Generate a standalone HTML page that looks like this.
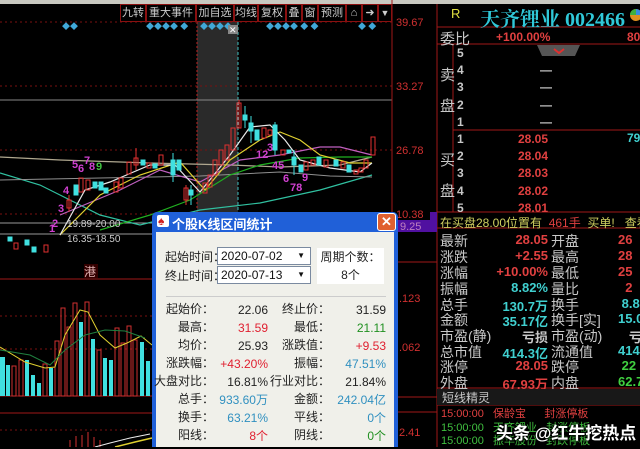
<!DOCTYPE html>
<html><head><meta charset="utf-8"><style>
*{margin:0;padding:0;box-sizing:border-box}
body{width:640px;height:447px;background:#000;overflow:hidden;position:relative;font-family:"Liberation Sans","Noto Sans CJK SC",sans-serif}
.a{position:absolute;white-space:nowrap}
.tb{position:absolute;top:4px;height:18px;border:1px solid #8a1010;color:#ccc;font-size:11px;line-height:16px;text-align:center;background:#000;white-space:nowrap;overflow:hidden}
.lab{position:absolute;color:#c8c8c8;font-size:14px;left:440px;width:110px;white-space:nowrap}
.v{position:absolute;font-size:13px;font-weight:bold;text-align:right;width:110px;left:438px;white-space:nowrap}
.l2{position:absolute;color:#c8c8c8;font-size:14px;left:551px;white-space:nowrap}
.v2{position:absolute;font-size:13px;font-weight:bold;left:618px;white-space:nowrap}
.dl{position:absolute;color:#222;font-size:12px;text-align:right;white-space:nowrap}
.dl div{height:18px;line-height:18px}
</style></head><body>
<div class="a" style="left:0;top:0;width:640px;height:4px;background:#c8c8c0"></div>
<svg class="a" style="left:0;top:0" width="640" height="447">
<rect x="197" y="22" width="41" height="190" fill="#2a2a2a"/>
<line x1="197" y1="22" x2="197" y2="212" stroke="#c02020" stroke-dasharray="2,2"/>
<line x1="238" y1="22" x2="238" y2="212" stroke="#40c0c0" stroke-dasharray="3,2"/>
<g stroke="#7a1010" stroke-dasharray="2,3">
<line x1="0" y1="22" x2="392" y2="22"/><line x1="0" y1="86" x2="392" y2="86"/><line x1="0" y1="150" x2="392" y2="150"/><line x1="0" y1="214" x2="392" y2="214"/>
<line x1="0" y1="316" x2="392" y2="316"/><line x1="0" y1="349" x2="392" y2="349"/><line x1="0" y1="430" x2="392" y2="430"/>
</g>
<line x1="0" y1="100" x2="392" y2="100" stroke="#888"/>
<line x1="0" y1="223" x2="152" y2="223" stroke="#999"/>
<line x1="0" y1="234" x2="152" y2="234" stroke="#999"/>
<g stroke="#a01818"><line x1="0" y1="279" x2="392" y2="279"/><line x1="0" y1="396" x2="392" y2="396"/><line x1="0" y1="413" x2="392" y2="413"/>
<line x1="392" y1="0" x2="392" y2="447"/><line x1="437" y1="4" x2="437" y2="447"/><line x1="453" y1="44" x2="453" y2="212"/>
<line x1="437" y1="27" x2="640" y2="27"/><line x1="437" y1="44" x2="640" y2="44"/><line x1="453" y1="130" x2="640" y2="130"/><line x1="437" y1="212" x2="640" y2="212"/><line x1="437" y1="228" x2="640" y2="228"/><line x1="437" y1="388" x2="640" y2="388"/><line x1="437" y1="405" x2="640" y2="405"/>
<line x1="392" y1="262" x2="437" y2="262"/><line x1="392" y1="397" x2="437" y2="397"/><line x1="392" y1="412" x2="437" y2="412"/></g>
<g>
<text x="62" y="29" font-size="8" fill="#40a8d8">◆◆</text>
<text x="146" y="29" font-size="8" fill="#40a8d8">◆◆◆◆ ◆</text>
<text x="200" y="29" font-size="8" fill="#40a8d8">◆◆◆◆</text>
<text x="266" y="29" font-size="8" fill="#40a8d8">◆◆◆◆ ◆ ◆</text>
<text x="358" y="29" font-size="8" fill="#40a8d8">◆ ◆</text>
</g>
<rect x="228" y="25" width="10" height="9" fill="#888"/><text x="229" y="33" font-size="9" fill="#fff">✕</text>
<polyline fill="none" stroke="#b0a890" stroke-width="1.2" points="0,157 60,160 150,163 230,165 280,167 340,165 372,157"/>
<polyline fill="none" stroke="#30c0a0" stroke-width="1.2" points="0,173 40,185 70,200 100,215 140,225 200,210 260,203 320,190 372,175"/>
<polyline fill="none" stroke="#909090" points="0,180 100,178 200,176 280,172 330,176 372,177"/>
<polyline fill="none" stroke="#20b020" stroke-width="1.2" points="100,230 150,215 190,200 230,175 260,165 300,158 340,157 372,157"/>
<polyline fill="none" stroke="#c060c0" stroke-width="1.2" points="60,215 120,190 160,170 200,182 240,160 280,155 320,147 340,147 372,155"/>
<polyline fill="none" stroke="#e0d030" stroke-width="1.2" points="60,235 100,195 140,175 180,162 205,190 230,160 260,140 280,132 300,140 320,155 350,163 372,163"/>
<polyline fill="none" stroke="#e8e8e8" stroke-width="1.2" points="60,235 85,190 110,182 150,165 175,165 200,192 230,155 250,127 270,125 285,140 300,160 330,168 360,172 372,163"/>
<g stroke="#e03030" fill="none">
<rect x="67" y="200" width="4" height="8"/><rect x="79" y="178" width="4" height="14"/><rect x="86" y="180" width="4" height="10"/><rect x="114" y="182" width="4" height="10"/><rect x="119" y="178" width="4" height="10"/><rect x="127" y="162" width="4" height="12"/><rect x="134" y="158" width="4" height="7"/><rect x="147" y="163" width="4" height="5"/><rect x="159" y="155" width="4" height="10"/>
<rect x="184" y="188" width="4" height="12"/><rect x="203" y="183" width="4" height="10"/><rect x="208" y="175" width="4" height="12"/><rect x="213" y="160" width="4" height="15"/><rect x="219" y="150" width="4" height="15"/><rect x="225" y="145" width="4" height="15"/><rect x="231" y="128" width="4" height="22"/><rect x="237" y="103" width="4" height="25"/>
<rect x="262" y="128" width="4" height="10"/><rect x="268" y="130" width="4" height="5"/><rect x="281" y="150" width="4" height="5"/><rect x="304" y="162" width="4" height="8"/><rect x="311" y="160" width="4" height="5"/><rect x="324" y="160" width="4" height="7"/><rect x="341" y="162" width="4" height="6"/><rect x="354" y="170" width="4" height="4"/><rect x="359" y="168" width="4" height="4"/><rect x="364" y="160" width="4" height="8"/><rect x="371" y="137" width="4" height="18"/>
<line x1="69" y1="195" x2="69" y2="212"/><line x1="136" y1="148" x2="136" y2="170"/><line x1="239" y1="100" x2="239" y2="128"/><line x1="186" y1="185" x2="186" y2="205"/>
<rect x="14" y="243" width="4" height="6"/><rect x="44" y="245" width="4" height="7"/>
</g>
<g fill="#40e0e0" stroke="#40e0e0">
<rect x="74" y="185" width="4" height="10"/><rect x="93" y="182" width="4" height="6"/><rect x="99" y="182" width="4" height="8"/><rect x="104" y="188" width="4" height="5"/><rect x="141" y="160" width="4" height="5"/><rect x="153" y="164" width="4" height="4"/><rect x="171" y="160" width="4" height="15"/><rect x="177" y="160" width="4" height="10"/><rect x="189" y="190" width="4" height="5"/>
<rect x="243" y="115" width="4" height="5"/><rect x="249" y="123" width="4" height="8"/><rect x="255" y="130" width="4" height="10"/><rect x="273" y="125" width="4" height="25"/><rect x="287" y="150" width="4" height="3"/><rect x="292" y="157" width="4" height="8"/><rect x="299" y="165" width="4" height="7"/><rect x="317" y="157" width="4" height="8"/><rect x="334" y="160" width="4" height="6"/><rect x="347" y="165" width="4" height="7"/>
<line x1="173" y1="153" x2="173" y2="182"/><line x1="191" y1="185" x2="191" y2="205"/><line x1="245" y1="106" x2="245" y2="128"/><line x1="251" y1="116" x2="251" y2="143"/><line x1="275" y1="122" x2="275" y2="155"/><line x1="294" y1="150" x2="294" y2="175"/>
<rect x="8" y="237" width="4" height="4"/><rect x="25" y="240" width="4" height="5"/><rect x="32" y="247" width="4" height="5"/>
</g>
<g font-size="11" fill="#d040d0" font-weight="bold">
<text x="63" y="194">4</text><text x="72" y="168">5</text><text x="78" y="172">6</text><text x="84" y="164">7</text><text x="89" y="170">8</text><text x="96" y="170" fill="#40c040">9</text>
<text x="58" y="212">3</text><text x="52" y="227">2</text><text x="49" y="232">1</text>
<text x="256" y="158">12</text><text x="267" y="151">3</text><text x="272" y="169">45</text><text x="283" y="182">6</text><text x="290" y="191">78</text><text x="302" y="181">9</text>
</g>
<text x="67" y="227" font-size="10" fill="#ccc">19.89-20.00</text>
<text x="67" y="242" font-size="10" fill="#ccc">16.35-18.50</text>
<rect x="84" y="264" width="14" height="14" fill="#300"/><text x="84" y="276" font-size="12" fill="#e0b0b0">港</text>
<g>
<rect x="0" y="357" width="5" height="39" fill="#40e0e0"/><rect x="6" y="365" width="4" height="31" fill="#40e0e0"/><rect x="12" y="366" width="4" height="30" fill="none" stroke="#d03030"/>
<rect x="19" y="360" width="4" height="36" fill="none" stroke="#d03030"/><rect x="25" y="360" width="4" height="36" fill="#40e0e0"/><rect x="31" y="375" width="4" height="21" fill="#40e0e0"/><rect x="37" y="383" width="4" height="13" fill="#40e0e0"/>
<rect x="43" y="364" width="4" height="32" fill="none" stroke="#d03030"/><rect x="49" y="368" width="4" height="28" fill="#40e0e0"/><rect x="55" y="341" width="4" height="55" fill="none" stroke="#d03030"/>
<rect x="61" y="308" width="4" height="88" fill="none" stroke="#d03030"/><rect x="67" y="327" width="4" height="69" fill="none" stroke="#d03030"/><rect x="73" y="303" width="4" height="93" fill="none" stroke="#d03030"/><rect x="79" y="322" width="4" height="74" fill="#40e0e0"/>
<rect x="85" y="302" width="4" height="94" fill="none" stroke="#d03030"/><rect x="91" y="339" width="4" height="57" fill="#40e0e0"/><rect x="97" y="350" width="4" height="46" fill="none" stroke="#d03030"/><rect x="103" y="358" width="4" height="38" fill="#40e0e0"/>
<rect x="109" y="360" width="4" height="36" fill="#40e0e0"/><rect x="115" y="328" width="4" height="68" fill="none" stroke="#d03030"/><rect x="121" y="343" width="4" height="53" fill="none" stroke="#d03030"/><rect x="127" y="326" width="4" height="70" fill="none" stroke="#d03030"/>
<rect x="133" y="340" width="4" height="56" fill="none" stroke="#d03030"/><rect x="140" y="342" width="4" height="54" fill="#40e0e0"/><rect x="146" y="361" width="4" height="35" fill="#40e0e0"/>
<polyline fill="none" stroke="#e0d030" points="0,347 25,362 45,368 55,367 65,335 80,310 88,312 100,335 115,348 127,343 141,336 152,345"/>
<polyline fill="none" stroke="#208040" points="0,350 30,355 50,365 65,350 85,335 105,330 125,331 145,338"/>
</g>
<g stroke="#d03030"><line x1="70" y1="440" x2="70" y2="447"/><line x1="76" y1="436" x2="76" y2="447"/><line x1="82" y1="435" x2="82" y2="447"/><line x1="88" y1="432" x2="88" y2="447"/><line x1="94" y1="437" x2="94" y2="447"/><line x1="100" y1="440" x2="100" y2="447"/></g>
<polyline fill="none" stroke="#eee" points="95,447 110,443 130,438 150,434"/><polyline fill="none" stroke="#e0d030" stroke-width="1.5" points="115,447 135,442 152,438"/>
<g font-size="11" fill="#d03030"><text x="396" y="26">39.67</text><text x="396" y="90">33.27</text><text x="396" y="154">26.78</text><text x="396" y="218">10.38</text><text x="399" y="302">.123</text><text x="399" y="351">.062</text><text x="399" y="436">2.41</text></g>
<rect x="398" y="220" width="39" height="12" fill="#5010a0"/><text x="400" y="230" font-size="11" fill="#c080c0">9.25</text>
<rect x="430" y="212" width="7" height="18" fill="#5010a0"/>
<circle cx="636" cy="15" r="6" fill="#e09020"/><path d="M636 15 L636 9 A6 6 0 0 1 642 15Z" fill="#3a8ae0"/><path d="M636 15 L630 15 A6 6 0 0 1 636 9Z" fill="#40b040"/>
<path d="M537 45 L580 45 L575 56 L542 56Z" fill="#555"/><path d="M554 49 L559 53 L564 49" stroke="#e03030" stroke-width="2" fill="none"/>
</svg>
<div class="tb" style="left:120px;width:26px">九转</div>
<div class="tb" style="left:146px;width:50px">重大事件</div>
<div class="tb" style="left:196px;width:38px">加自选</div>
<div class="tb" style="left:234px;width:24px">均线</div>
<div class="tb" style="left:258px;width:28px">复权</div>
<div class="tb" style="left:286px;width:16px">叠</div>
<div class="tb" style="left:302px;width:16px">窗</div>
<div class="tb" style="left:318px;width:28px">预测</div>
<div class="tb" style="left:346px;width:16px">⌂</div>
<div class="tb" style="left:362px;width:16px">➜</div>
<div class="tb" style="left:378px;width:14px;font-size:9px">▼</div>
<div class="a" style="left:451px;top:6px;color:#e0e040;font-size:13px">R</div>
<div class="a" style="left:480px;top:3px;color:#30c8d8;font-size:20px;font-family:'Liberation Serif','Noto Serif CJK SC',serif;font-weight:bold">天齐锂业 002466</div>
<div class="a" style="left:440px;top:28px;color:#c8c8c8;font-size:15px">委比</div>
<div class="a" style="left:496px;top:30px;color:#e04040;font-size:12px;font-weight:bold">+100.00%</div>
<div class="a" style="left:627px;top:30px;color:#e04040;font-size:12px;font-weight:bold">80</div>
<div class="a" style="left:440px;top:64px;color:#c8c8c8;font-size:15px">卖</div>
<div class="a" style="left:440px;top:95px;color:#c8c8c8;font-size:15px">盘</div>
<div class="a" style="left:440px;top:149px;color:#c8c8c8;font-size:15px">买</div>
<div class="a" style="left:440px;top:180px;color:#c8c8c8;font-size:15px">盘</div>
<div class="a" style="left:457px;top:45px;color:#c8c8c8;font-size:12px;font-weight:bold;line-height:17.2px">5<br>4<br>3<br>2<br>1</div>
<div class="a" style="left:540px;top:45px;color:#c8c8c8;font-size:12px;font-weight:bold;line-height:17.2px">&nbsp;<br>—<br>—<br>—<br>—</div>
<div class="a" style="left:457px;top:131px;color:#c8c8c8;font-size:12px;font-weight:bold;line-height:17.2px">1<br>2<br>3<br>4<br>5</div>
<div class="a" style="left:518px;top:131px;color:#e04040;font-size:12px;font-weight:bold;line-height:17.2px">28.05<br>28.04<br>28.03<br>28.02<br>28.01</div>
<div class="a" style="left:627px;top:131px;color:#40d0d0;font-size:12px;font-weight:bold">79</div>
<div class="a" style="left:440px;top:214px;font-size:12px;color:#d0d060">在买盘28.00位置有 <span style="color:#e04040">&nbsp;461手</span>&nbsp; 买单! &nbsp;&nbsp;查看</div>
<div class="lab" style="top:231px">最新</div><div class="v" style="top:232px;color:#e04040">28.05</div><div class="l2" style="top:231px">开盘</div><div class="v2" style="top:232px;color:#e04040">26</div>
<div class="lab" style="top:247px">涨跌</div><div class="v" style="top:248px;color:#e04040">+2.55</div><div class="l2" style="top:247px">最高</div><div class="v2" style="top:248px;color:#e04040">28</div>
<div class="lab" style="top:263px">涨幅</div><div class="v" style="top:264px;color:#e04040">+10.00%</div><div class="l2" style="top:263px">最低</div><div class="v2" style="top:264px;color:#e04040">25</div>
<div class="lab" style="top:279px">振幅</div><div class="v" style="top:280px;color:#40d0d0">8.82%</div><div class="l2" style="top:279px">量比</div><div class="v2" style="top:280px;color:#e04040">&nbsp;&nbsp;2</div>
<div class="lab" style="top:295px">总手</div><div class="v" style="top:296px;color:#40d0d0">130.7万</div><div class="l2" style="top:295px">换手</div><div class="v2" style="top:296px;color:#40d0d0">&nbsp;8.8</div>
<div class="lab" style="top:310px">金额</div><div class="v" style="top:311px;color:#40d0d0">35.17亿</div><div class="l2" style="top:310px">换手[实]</div><div class="v2" style="top:311px;color:#40d0d0">15.0</div>
<div class="lab" style="top:326px">市盈(静)</div><div class="v" style="top:327px;color:#c8c8c8">亏损</div><div class="l2" style="top:326px">市盈(动)</div><div class="v2" style="top:327px;color:#c8c8c8">&nbsp;&nbsp;&nbsp;亏</div>
<div class="lab" style="top:342px">总市值</div><div class="v" style="top:343px;color:#40d0d0">414.3亿</div><div class="l2" style="top:342px">流通值</div><div class="v2" style="top:343px;color:#40d0d0">414.</div>
<div class="lab" style="top:357px">涨停</div><div class="v" style="top:358px;color:#e04040">28.05</div><div class="l2" style="top:357px">跌停</div><div class="v2" style="top:358px;color:#40d040">&nbsp;22</div>
<div class="lab" style="top:373px">外盘</div><div class="v" style="top:374px;color:#e04040">67.93万</div><div class="l2" style="top:373px">内盘</div><div class="v2" style="top:374px;color:#40d040">62.7</div>
<div class="a" style="left:437px;top:389px;width:203px;height:16px;background:#181818"></div>
<div class="a" style="left:442px;top:389px;color:#c8c8c8;font-size:12px">短线精灵</div>
<div class="a" style="left:441px;top:408px;font-size:11px;line-height:13.5px;color:#e04040">15:00:00 &nbsp;&nbsp;保龄宝 &nbsp;&nbsp;&nbsp;&nbsp;&nbsp;封涨停板<br><span style="color:#40c040">15:00:00 &nbsp;&nbsp;天齐锂业 &nbsp;&nbsp;封涨停板</span><br><span style="color:#40c040">15:00:00 &nbsp;&nbsp;振华股份 &nbsp;&nbsp;封跌停板</span></div>
<div class="a" style="left:496px;top:419px;color:#fff;font-size:17px;font-weight:bold;text-shadow:0 0 2px #000,1px 1px 2px #000">头条 @红牛挖热点</div>
<div class="a" style="left:152px;top:212px;width:246px;height:235px;background:#2060d8;border-radius:5px 5px 0 0"></div>
<div class="a" style="left:156px;top:232px;width:238px;height:215px;background:#f0f0ea"></div>
<div class="a" style="left:157px;top:215px;width:12px;height:12px;background:#fff;border-radius:2px"></div>
<div class="a" style="left:158px;top:214px;color:#d02020;font-size:12px">♠</div>
<div class="a" style="left:172px;top:214px;color:#fff;font-size:13px;font-weight:bold">个股K线区间统计</div>
<div class="a" style="left:377px;top:213px;width:19px;height:18px;background:#e06030;border:1px solid #fff;border-radius:3px;color:#fff;font-size:13px;text-align:center;line-height:16px;font-weight:bold">✕</div>
<div class="a" style="left:165px;top:248px;color:#222;font-size:12px">起始时间：</div>
<div class="a" style="left:165px;top:267px;color:#222;font-size:12px">终止时间：</div>
<div class="a" style="left:217px;top:247px;width:94px;height:18px;background:#fff;border:1px solid #7a8aa0;font-size:12px;line-height:16px;padding-left:3px;color:#111">2020-07-02<span style="position:absolute;right:5px;font-size:8px">▼</span></div>
<div class="a" style="left:217px;top:266px;width:94px;height:18px;background:#fff;border:1px solid #7a8aa0;font-size:12px;line-height:16px;padding-left:3px;color:#111">2020-07-13<span style="position:absolute;right:5px;font-size:8px">▼</span></div>
<div class="a" style="left:317px;top:248px;width:67px;height:36px;background:#fff;color:#222;font-size:12px;text-align:center;line-height:18px">周期个数：<br>8个</div>
<div class="a" style="left:166px;top:296px;width:220px;height:1px;background:#ccc"></div>
<div class="dl" style="left:150px;width:64px;top:300px"><div>起始价：</div><div>最高：</div><div>均价：</div><div>涨跌幅：</div><div>大盘对比：</div><div>总手：</div><div>换手：</div><div>阳线：</div></div>
<div class="dl" style="left:208px;width:60px;top:301px"><div>22.06</div><div style="color:#e02030">31.59</div><div>25.93</div><div style="color:#e02030">+43.20%</div><div>16.81%</div><div style="color:#3090c0">933.60万</div><div style="color:#3090c0">63.21%</div><div style="color:#e02030">8个</div></div>
<div class="dl" style="left:262px;width:68px;top:300px"><div>终止价：</div><div>最低：</div><div>涨跌值：</div><div>振幅：</div><div>行业对比：</div><div>金额：</div><div>平线：</div><div>阴线：</div></div>
<div class="dl" style="left:322px;width:64px;top:301px"><div>31.59</div><div style="color:#209020">21.11</div><div style="color:#e02030">+9.53</div><div style="color:#3090c0">47.51%</div><div>21.84%</div><div style="color:#3090c0">242.04亿</div><div style="color:#3090c0">0个</div><div style="color:#209020">0个</div></div>
</body></html>
